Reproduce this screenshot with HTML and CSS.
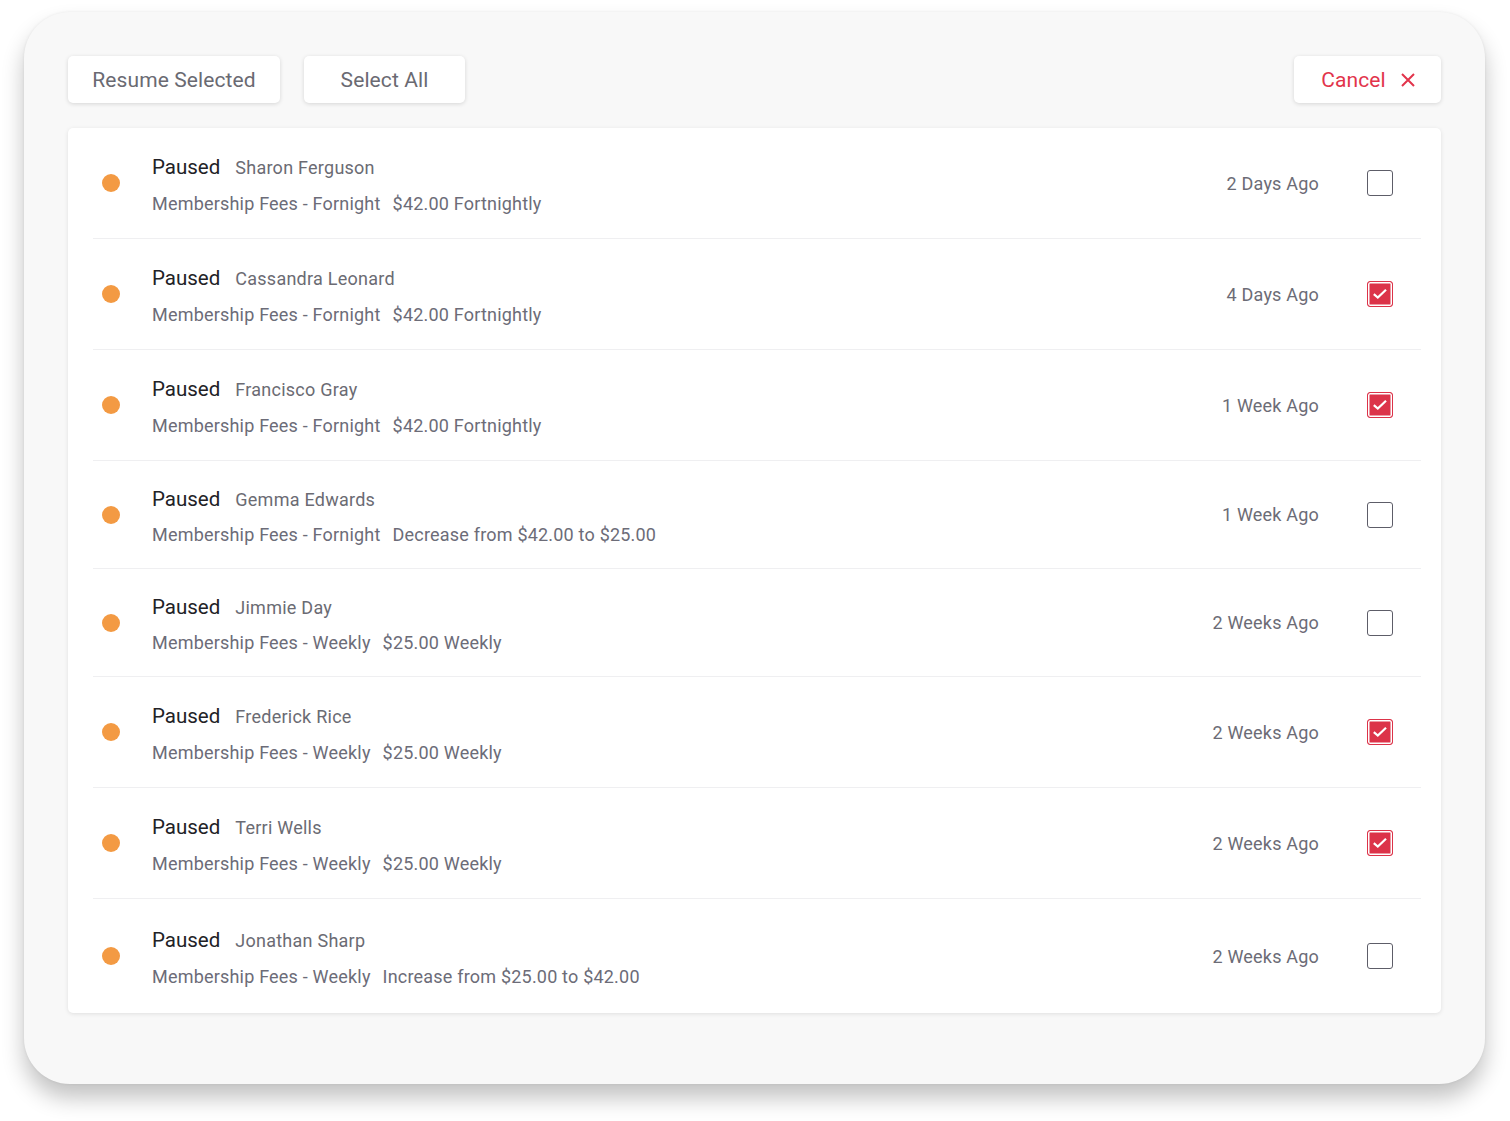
FILE: index.html
```html
<!DOCTYPE html>
<html lang="en">
<head>
<meta charset="utf-8">
<title>Paused memberships</title>
<link rel="stylesheet" href="styles.css">
</head>
<body>
<div class="panel">
  <div class="toolbar">
    <button class="btn btn-resume">Resume Selected</button>
    <button class="btn btn-select">Select All</button>
    <span class="spacer"></span>
    <button class="btn btn-cancel">Cancel
      <svg class="x-icon" viewBox="0 0 16 16" width="16" height="16"><path d="M2 2L14 14M14 2L2 14" stroke="currentColor" stroke-width="2" fill="none" stroke-linecap="butt"/></svg>
    </button>
  </div>
  <div class="list">
    <div class="row">
      <span class="dot"></span>
      <div class="info">
        <div class="line1"><span class="status">Paused</span><span class="name">Sharon Ferguson</span></div>
        <div class="line2"><span>Membership Fees - Fornight</span><span>$42.00 Fortnightly</span></div>
      </div>
      <span class="when">2 Days Ago</span>
      <span class="check"></span>
    </div>
    <div class="row">
      <span class="dot"></span>
      <div class="info">
        <div class="line1"><span class="status">Paused</span><span class="name">Cassandra Leonard</span></div>
        <div class="line2"><span>Membership Fees - Fornight</span><span>$42.00 Fortnightly</span></div>
      </div>
      <span class="when">4 Days Ago</span>
      <span class="check checked"><svg viewBox="0 0 16 16" width="16" height="16"><path d="M1.8 8.2L5.8 11.6L14 3.8" stroke="#fff" stroke-width="2.2" fill="none"/></svg></span>
    </div>
    <div class="row">
      <span class="dot"></span>
      <div class="info">
        <div class="line1"><span class="status">Paused</span><span class="name">Francisco Gray</span></div>
        <div class="line2"><span>Membership Fees - Fornight</span><span>$42.00 Fortnightly</span></div>
      </div>
      <span class="when">1 Week Ago</span>
      <span class="check checked"><svg viewBox="0 0 16 16" width="16" height="16"><path d="M1.8 8.2L5.8 11.6L14 3.8" stroke="#fff" stroke-width="2.2" fill="none"/></svg></span>
    </div>
    <div class="row short">
      <span class="dot"></span>
      <div class="info">
        <div class="line1"><span class="status">Paused</span><span class="name">Gemma Edwards</span></div>
        <div class="line2"><span>Membership Fees - Fornight</span><span>Decrease from $42.00 to $25.00</span></div>
      </div>
      <span class="when">1 Week Ago</span>
      <span class="check"></span>
    </div>
    <div class="row short">
      <span class="dot"></span>
      <div class="info">
        <div class="line1"><span class="status">Paused</span><span class="name">Jimmie Day</span></div>
        <div class="line2"><span>Membership Fees - Weekly</span><span>$25.00 Weekly</span></div>
      </div>
      <span class="when">2 Weeks Ago</span>
      <span class="check"></span>
    </div>
    <div class="row">
      <span class="dot"></span>
      <div class="info">
        <div class="line1"><span class="status">Paused</span><span class="name">Frederick Rice</span></div>
        <div class="line2"><span>Membership Fees - Weekly</span><span>$25.00 Weekly</span></div>
      </div>
      <span class="when">2 Weeks Ago</span>
      <span class="check checked"><svg viewBox="0 0 16 16" width="16" height="16"><path d="M1.8 8.2L5.8 11.6L14 3.8" stroke="#fff" stroke-width="2.2" fill="none"/></svg></span>
    </div>
    <div class="row">
      <span class="dot"></span>
      <div class="info">
        <div class="line1"><span class="status">Paused</span><span class="name">Terri Wells</span></div>
        <div class="line2"><span>Membership Fees - Weekly</span><span>$25.00 Weekly</span></div>
      </div>
      <span class="when">2 Weeks Ago</span>
      <span class="check checked"><svg viewBox="0 0 16 16" width="16" height="16"><path d="M1.8 8.2L5.8 11.6L14 3.8" stroke="#fff" stroke-width="2.2" fill="none"/></svg></span>
    </div>
    <div class="row last">
      <span class="dot"></span>
      <div class="info">
        <div class="line1"><span class="status">Paused</span><span class="name">Jonathan Sharp</span></div>
        <div class="line2"><span>Membership Fees - Weekly</span><span>Increase from $25.00 to $42.00</span></div>
      </div>
      <span class="when">2 Weeks Ago</span>
      <span class="check"></span>
    </div>
  </div>
</div>
</body>
</html>
```

FILE: styles.css
```css
* { box-sizing: border-box; }

html, body {
  margin: 0;
  padding: 0;
  background: #ffffff;
}

body {
  font-family: Roboto, "Liberation Sans", Arial, sans-serif;
  padding: 12px 25px 0 24px;
  min-height: 1121px;
}

.panel {
  width: 1461px;
  height: 1072px;
  background: #f8f8f8;
  border-radius: 46px;
  padding: 44px 44px 0 44px;
  box-shadow: 0 14px 22px rgba(0, 0, 0, 0.24), 0 0 3px rgba(0, 0, 0, 0.07);
}

.toolbar {
  display: flex;
  align-items: center;
  gap: 24px;
  height: 47px;
  margin-bottom: 25px;
}

.spacer { flex: 1; }

.btn {
  height: 47px;
  border: none;
  background: #ffffff;
  border-radius: 5px;
  box-shadow: 0 1px 4px rgba(0, 0, 0, 0.14);
  font-family: Roboto, "Liberation Sans", Arial, sans-serif;
  font-size: 21px;
  color: #6a6a72;
  padding: 0;
  display: flex;
  align-items: center;
  justify-content: center;
  letter-spacing: 0.1px;
}

.btn-resume { width: 212px; }
.btn-select { width: 161px; }

.btn-cancel {
  width: 147px;
  color: #e2344b;
  gap: 14px;
  padding-left: 2px;
}

.x-icon { display: block; }

.list {
  background: #ffffff;
  border-radius: 5px;
  box-shadow: 0 1px 4px rgba(0, 0, 0, 0.10);
  padding: 0 20px 0 25px;
}

.row {
  display: flex;
  align-items: center;
  height: 111px;
  border-bottom: 1px solid #efeff1;
}

.row.short { height: 108px; }
.row.last { border-bottom: none; height: 114px; }

.dot {
  width: 18px;
  height: 18px;
  border-radius: 50%;
  background: #f39a43;
  margin-left: 9px;
  margin-right: 32px;
  flex: none;
}

.info {
  flex: 1;
  display: flex;
  flex-direction: column;
  gap: 12px;
  padding-top: 4px;
}

.line1 {
  display: flex;
  align-items: baseline;
  gap: 15px;
  height: 24px;
}

.status {
  font-size: 20.5px;
  color: #222226;
}

.name {
  font-size: 18px;
  color: #6b6b73;
  letter-spacing: 0.25px;
}

.line2 {
  display: flex;
  gap: 12px;
  font-size: 18px;
  color: #6c6c78;
  letter-spacing: 0.2px;
  height: 24px;
  align-items: center;
}

.when {
  font-size: 18px;
  color: #6c6c76;
  letter-spacing: 0.2px;
  margin-right: 48px;
}

.check {
  width: 26px;
  height: 26px;
  border: 1.6px solid #5d5d68;
  border-radius: 3px;
  margin-right: 28px;
  flex: none;
  display: flex;
  align-items: center;
  justify-content: center;
}

.check.checked {
  border: 1.5px solid #dc3349;
  background: #dc3349;
  box-shadow: inset 0 0 0 1.5px #ffffff;
}

.check svg { display: block; }
```
